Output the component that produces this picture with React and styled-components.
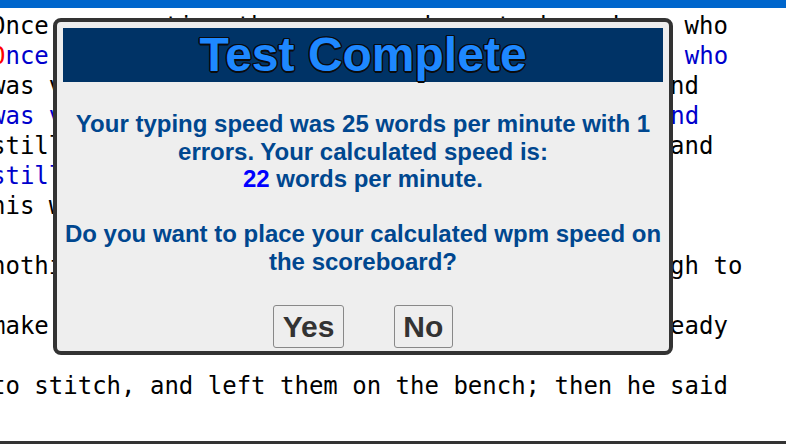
import styled, { createGlobalStyle } from "styled-components";

const GlobalStyle = createGlobalStyle`
  body {
    margin: 0;
    background: #fff;
    overflow: hidden;
  }
`;

const Page = styled.div`
  position: relative;
  width: 786px;
  height: 444px;
  overflow: hidden;
`;

const TopBar = styled.div`
  height: 8px;
  background: #0066cc;
`;

const Passage = styled.div`
  margin-left: -9px;
  padding: 3px 0 10px;
  border-bottom: 3px solid #333;
  font-family: "DejaVu Sans Mono", monospace;
  font-size: 24px;
  line-height: 30px;
`;

const Line = styled.div`
  height: 30px;
  white-space: pre;
  color: ${(p) => (p.$typed ? "#0000cc" : "#000")};
`;

const Wrong = styled.span`
  color: #ff0000;
`;

const Dialog = styled.div`
  position: absolute;
  left: 53px;
  top: 18px;
  width: 600px;
  padding: 6px 6px 3px;
  border: 4px solid #333;
  border-radius: 8px;
  background: #eee;
  font-family: "Liberation Sans", Arial, sans-serif;
  text-align: center;
`;

const Title = styled.h1`
  margin: 0;
  height: 54px;
  line-height: 54px;
  background: #003366;
  color: #1e88ff;
  font-size: 48px;
  font-weight: 700;
  text-shadow: -1.5px 0 #0b0b0b, 1.5px 0 #0b0b0b, 0 -1.5px #0b0b0b,
    0 1.5px #0b0b0b, -1px -1px #0b0b0b, 1px 1px #0b0b0b, -1px 1px #0b0b0b,
    1px -1px #0b0b0b;
`;

const Message = styled.p`
  margin: 28px 0 0;
  font-size: 24px;
  font-weight: 700;
  line-height: 27.6px;
  color: #00478f;
`;

const Speed = styled.span`
  color: #0000ff;
`;

const Buttons = styled.div`
  display: flex;
  justify-content: center;
  gap: 50px;
  margin-top: 29px;
`;

const Button = styled.button`
  padding: 4px 8.5px;
  border: 1px solid #888;
  border-radius: 3px;
  background: #eee;
  color: #333;
  font-family: "Liberation Sans", Arial, sans-serif;
  font-size: 30px;
  font-weight: 700;
  line-height: 33px;
`;

const lines = [
  {
    text: "Once upon a time there was an honest shoemaker, who",
    typed: "Once upon a time there was an honest shoemaker, who",
    errors: [0],
  },
  {
    text: "was very poor. He worked as hard as he could, and",
    typed: "was very poor. He worked as hard as he could, and",
  },
  {
    text: "still he could not earn enough to keep himself and",
    typed: "still he could not earn enough to keep himself",
  },
  { text: "his wife. At last there came a day when he had", typed: "" },
  { text: "nothing left but one piece of leather, big enough to", typed: "" },
  { text: "make one pair of shoes. He cut out the shoes, ready", typed: "" },
  { text: "to stitch, and left them on the bench; then he said", typed: "" },
];

function TypedLine({ typed, errors = [] }) {
  return (
    <Line $typed>
      {typed.split("").map((ch, i) =>
        errors.includes(i) ? <Wrong key={i}>{ch}</Wrong> : ch
      )}
    </Line>
  );
}

export default function App() {
  return (
    <Page>
      <GlobalStyle />
      <TopBar />
      <Passage>
        {lines.map((l, i) => (
          <div key={i}>
            <Line>{l.text}</Line>
            <TypedLine typed={l.typed} errors={l.errors} />
          </div>
        ))}
      </Passage>

      <Dialog>
        <Title>Test Complete</Title>
        <Message>
          Your typing speed was 25 words per minute with 1 errors. Your
          calculated speed is:
          <br />
          <Speed>22</Speed> words per minute.
          <br />
          <br />
          Do you want to place your calculated wpm speed on the scoreboard?
        </Message>
        <Buttons>
          <Button>Yes</Button>
          <Button>No</Button>
        </Buttons>
      </Dialog>
    </Page>
  );
}
